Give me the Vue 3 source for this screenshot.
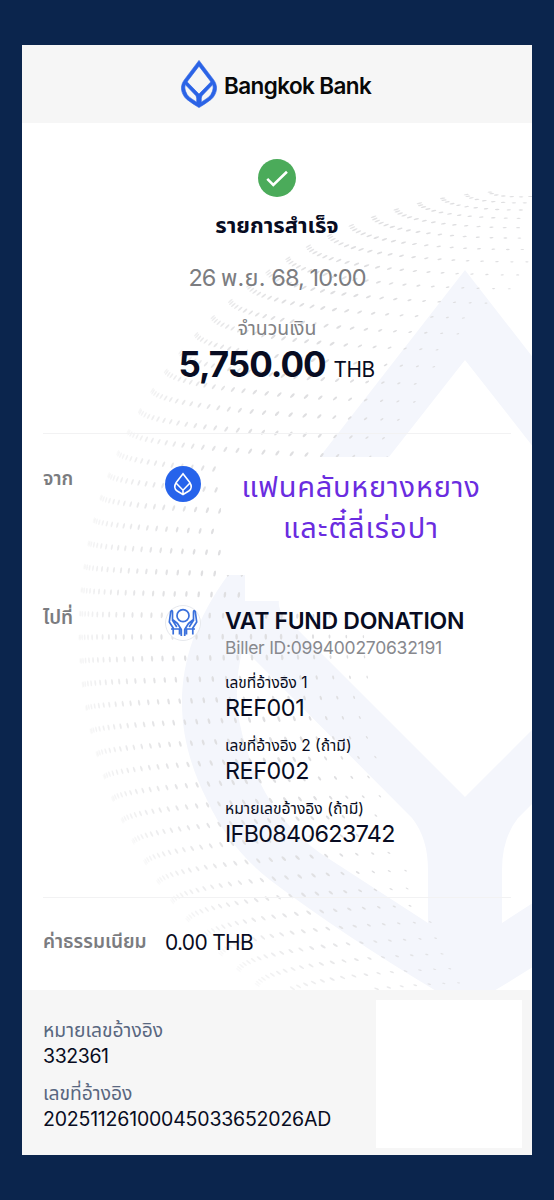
<script setup>
const logoPath =
  'M0 0 L-237 305 C-292 380 -296 455 -258 530 Q-236 578 -195 610 Q-110 674 0 738 Q110 674 195 610 Q236 578 258 530 C296 455 292 380 237 305 Z' +
  'M0 90 L182 322 Q191 334 181 346 L0 527 L-181 346 Q-191 334 -182 322 Z' +
  'M-37 653 V600 Q-37 568 -53 548 L-222 378 Q-236 430 -218 480 Q-198 545 -145 583 Z' +
  'M37 653 V600 Q37 568 53 548 L222 378 Q236 430 218 480 Q198 545 145 583 Z'

// Dotted globe behind the slip, in card-body coordinates
const R = 441
const cx = 498
const cy = 509
const rad = Math.PI / 180
const dots = []
for (let lat = -86.1; lat < 88; lat += 3.1) {
  const cl = Math.cos(lat * rad)
  const step = 2.4 / Math.max(0.12, Math.pow(cl, 0.75))
  for (let lon = -88; lon <= 60; lon += step) {
    const x = R * cl * Math.sin(lon * rad)
    const z = cl * Math.cos(lon * rad)
    const y = R * Math.sin(lat * rad) * (1 - 0.16 * z)
    if (cx + x > 509 || cy + y > 866) continue
    const inner = Math.hypot(x - 45, y * (y > 0 ? 0.5 : 0.56))
    const grow = Math.min(1, (inner - 198) / 90)
    if (grow <= 0) continue
    const k = 0.5 + 0.5 * grow
    dots.push({
      x: (cx + x).toFixed(1),
      y: (cy + y).toFixed(1),
      a: (Math.atan2(y, x) / rad).toFixed(1),
      rx: ((0.75 + 0.7 * z) * k).toFixed(2),
      ry: (3 * k).toFixed(2),
      o: Math.min(1, 0.15 + z * 1.3 + Math.max(0, -y / R - 0.45) * 1.4).toFixed(2)
    })
  }
}
const refs = [
  { label: 'เลขที่อ้างอิง 1', value: 'REF001', cls: 'r1' },
  { label: 'เลขที่อ้างอิง 2 (ถ้ามี)', value: 'REF002', cls: 'r2' },
  { label: 'หมายเลขอ้างอิง (ถ้ามี)', value: 'IFB0840623742', cls: 'r3' }
]
</script>

<template>
  <div class="page">
    <article class="card">
      <header class="head">
        <svg class="logo" viewBox="-290 -6 580 750" preserveAspectRatio="none"><path :d="logoPath" fill="#2b63e6" stroke="#2b63e6" stroke-width="10" fill-rule="evenodd" /></svg>
        <span class="brand">Bangkok Bank</span>
      </header>

      <main class="body">
        <svg class="bg" viewBox="0 0 510 867">
          <path transform="translate(443 147)" :d="logoPath" fill="#f4f6fc" fill-rule="evenodd" />
          <g fill="#dfdfe1">
            <ellipse v-for="(d, i) in dots" :key="i" :cx="d.x" :cy="d.y" :rx="d.rx" :ry="d.ry" :opacity="d.o" :transform="`rotate(${d.a} ${d.x} ${d.y})`" />
          </g>
          <path d="M199 334H510V478H223V452H199Z" fill="#fff" />
        </svg>

        <section class="hero">
          <svg class="check" viewBox="0 0 38 38"><circle cx="19" cy="19" r="19" fill="#4bab5a" /><path d="M10.2 20.8 15.3 26 28 13.7" fill="none" stroke="#fff" stroke-width="2.6" stroke-linecap="square" /></svg>
          <h1 class="status">รายการสำเร็จ</h1>
          <p class="date">26 <span class="th">พ.ย.</span> 68, 10:00</p>
          <p class="amount-label">จำนวนเงิน</p>
          <p class="amount"><b>5,750.00</b><span>THB</span></p>
        </section>

        <section class="row from">
          <span class="side">จาก</span>
          <svg class="ico" viewBox="0 0 36 36"><circle cx="18" cy="18" r="18" fill="#2663eb" /><path d="M18 7.7 24.8 16.5C27.2 20.3 26.3 23.3 23.8 25L18 28.5 12.2 25C9.7 23.3 8.8 20.3 11.2 16.5ZM11 17 18 24.2 25 17M18 24.2V28" fill="none" stroke="#fff" stroke-width="1.6" /></svg>
          <div class="who"><span class="w1">แฟนคลับหยางหยาง</span><span class="w2">และตี๋ลี่เร่อปา</span></div>
        </section>

        <section class="row to">
          <span class="side">ไปที่</span>
          <svg class="ico ico-to" viewBox="0 0 36 36">
            <circle cx="18" cy="18" r="17.5" fill="#fff" stroke="#e6e8ed" />
            <g fill="none" stroke="#3a70dc" stroke-width="1.7" stroke-linejoin="round">
              <circle cx="18" cy="10.7" r="6" />
              <path d="M5.8 6 4.3 17 8.2 23V29.5M5.8 6Q7.5 4.8 7.5 7V14.5L12.5 18.5 16.3 24.5V31M7.2 14.8 11.8 22M6 24H14.5V29.5M30.2 6 31.7 17 27.8 23V29.5M30.2 6Q28.5 4.8 28.5 7V14.5L23.5 18.5 19.7 24.5V31M28.8 14.8 24.2 22M30 24H21.5V29.5" />
            </g>
          </svg>
          <div class="info">
            <h2>VAT FUND DONATION</h2>
            <p class="biller">Biller ID:099400270632191</p>
            <div v-for="r in refs" :key="r.value" class="ref" :class="r.cls">
              <div class="lbl">{{ r.label }}</div>
              <div class="val">{{ r.value }}</div>
            </div>
          </div>
        </section>

        <section class="fee">
          <span class="side">ค่าธรรมเนียม</span>
          <span class="fee-val">0.00 THB</span>
        </section>
      </main>

      <footer class="foot">
        <div class="nums">
          <p class="fl">หมายเลขอ้างอิง</p>
          <p class="fv v1">332361</p>
          <p class="fl f2">เลขที่อ้างอิง</p>
          <p class="fv">20251126100045033652026AD</p>
        </div>
        <div class="qr"></div>
      </footer>
    </article>
  </div>
</template>

<style>
body { background: #0b254d; }
</style>

<style scoped>
* { box-sizing: border-box; }
.page { width: 554px; height: 1200px; padding: 45px 22px; background: #0b254d; font-family: Inter, "Noto Sans Thai", "Noto Sans", sans-serif; color: #080c22; white-space: nowrap; overflow: hidden; }
p, h1, h2 { margin: 0; font-weight: 400; }
.card { width: 510px; height: 1110px; background: #fff; display: flex; flex-direction: column; }
.head { height: 78px; background: #f6f6f6; display: flex; align-items: center; padding-left: 159px; }
.logo { width: 36px; height: 48px; margin-right: 7px; }
.brand { font-size: 22.5px; font-weight: 600; letter-spacing: -0.6px; color: #080808; line-height: 30px; padding-top: 3px; }
.body { position: relative; height: 867px; display: flex; flex-direction: column; }
.bg { position: absolute; inset: 0; width: 510px; height: 867px; }
.hero, .row, .fee { position: relative; }
.hero { height: 311px; margin: 0 21px; border-bottom: 1px solid #f2f2f3; display: flex; flex-direction: column; align-items: center; }
.check { width: 38px; height: 38px; margin-top: 36px; flex: none; }
.status { font-size: 22px; font-weight: 700; line-height: 32px; margin-top: 12px; }
.date { font-size: 23.5px; line-height: 32px; margin-top: 21px; color: #7c7d81; letter-spacing: -0.95px; }
.th { letter-spacing: 0.2px; }
.amount-label { font-size: 19.4px; line-height: 26px; margin-top: 21px; color: #808184; }
.amount { line-height: 44px; margin-top: 1px; margin-right: 1px; display: flex; align-items: baseline; gap: 8px; }
.amount b { font-size: 35px; font-weight: 700; letter-spacing: -1px; }
.amount span { font-size: 20.8px; letter-spacing: -0.5px; }
.row { display: flex; align-items: flex-start; padding-left: 21px; }
.side { width: 122px; color: #7b7c80; font-weight: 600; font-size: 19px; line-height: 28px; }
.ico { width: 36px; height: 36px; flex: none; }
.from { height: 138px; padding-top: 32px; }
.from .side { margin-top: -1px; }
.who { width: 238px; margin-left: 41px; display: flex; flex-direction: column; align-items: center; color: #6a2ce0; font-size: 29px; line-height: 41px; }
.w1 { letter-spacing: 0.75px; }
.w2 { letter-spacing: 1px; }
.to { height: 325px; padding-top: 32px; }
.ico-to { margin-top: 1px; }
.info { margin-left: 24px; padding-top: 1.5px; }
h2 { font-size: 23px; font-weight: 600; line-height: 30px; letter-spacing: -0.3px; }
.biller { font-size: 17.5px; line-height: 24px; color: #88898e; letter-spacing: -0.25px; }
.ref { height: 63.3px; }
.r1 { margin-top: 12px; }
.lbl { font-size: 15.5px; line-height: 22px; }
.r3 .lbl { font-size: 15.7px; }
.val { font-size: 23.3px; line-height: 28px; letter-spacing: -0.4px; }
.r3 .val { letter-spacing: -0.65px; }
.fee { flex: 1; margin: 0 21px; border-top: 1px solid #f2f2f3; display: flex; align-items: flex-start; padding-top: 30px; }
.fee-val { font-size: 21px; line-height: 30px; letter-spacing: -0.7px; }
.foot { flex: 1; background: #f6f6f6; display: flex; justify-content: space-between; padding: 10px 10px 6px 21px; }
.nums { padding-top: 17px; }
.fl { font-size: 19.3px; line-height: 26px; color: #596780; }
.f2 { margin-top: 10px; }
.fv { font-size: 19.5px; line-height: 27px; letter-spacing: -0.2px; }
.v1 { letter-spacing: -0.4px; }
.qr { width: 146px; height: 148px; background: #fff; }
</style>
